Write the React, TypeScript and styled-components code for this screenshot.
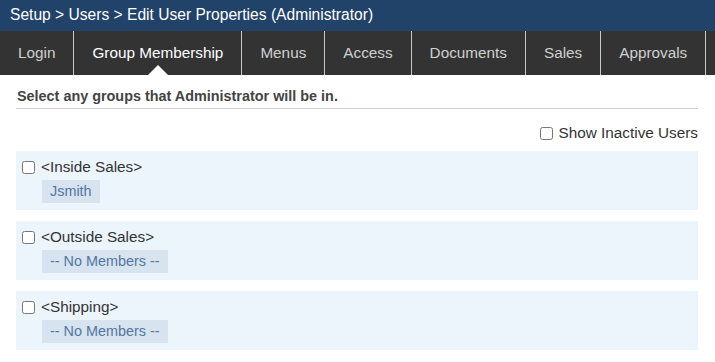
import React, { useState } from 'react';
import styled, { createGlobalStyle } from 'styled-components';

const GlobalStyle = createGlobalStyle`
  body {
    margin: 0;
    background: #fff;
    font-family: "Liberation Sans", Arial, sans-serif;
  }
`;

const TitleBar = styled.div`
  height: 31px;
  background: #214269;
  color: #fff;
  font-size: 15.6px;
  line-height: 29px;
  padding: 0 10px;
`;

const TabBar = styled.div`
  display: flex;
  height: 44px;
  background: #333;
`;

const Tab = styled.div<{ $active?: boolean }>`
  position: relative;
  display: flex;
  align-items: center;
  padding: 0 18px;
  border-right: 1px solid #c8c8c8;
  font-size: 15.3px;
  color: ${(p) => (p.$active ? '#fff' : '#d0d0d0')};
  white-space: nowrap;

  ${(p) =>
    p.$active &&
    `
    &::after {
      content: '';
      position: absolute;
      left: 50%;
      bottom: 0;
      margin-left: -10px;
      border-left: 10px solid transparent;
      border-right: 10px solid transparent;
      border-bottom: 10px solid #fff;
    }
  `}
`;

const Content = styled.div`
  padding: 13px 17px 0 16px;
`;

const Instructions = styled.div`
  font-size: 14.4px;
  line-height: 17px;
  font-weight: bold;
  color: #444;
  padding: 0 0 3px 1px;
  border-bottom: 1px solid #d0d0d0;
`;

const OptionsRow = styled.div`
  display: flex;
  justify-content: flex-end;
  padding: 15px 0 9px;
`;

const CheckLabel = styled.label`
  display: flex;
  align-items: center;
  gap: 6px;
  font-size: 15.3px;
  line-height: 18px;
  color: #333;
`;

const Box = styled.input`
  width: 13px;
  height: 13px;
  margin: 0;
`;

const GroupCard = styled.div`
  background: #ecf4fc;
  padding: 7px 6px 7px 6px;
  margin-bottom: 11px;
`;

const GroupMembers = styled.div`
  display: flex;
  gap: 6px;
  margin: 4px 0 0 20px;
`;

const Chip = styled.span`
  display: inline-block;
  background: #d7e3ef;
  color: #52779f;
  font-size: 14.4px;
  line-height: 23px;
  padding: 0 8px;
`;

const tabs = ['Login', 'Group Membership', 'Menus', 'Access', 'Documents', 'Sales', 'Approvals'];

const groups = [
  { name: '<Inside Sales>', members: ['Jsmith'] },
  { name: '<Outside Sales>', members: [] as string[] },
  { name: '<Shipping>', members: [] as string[] },
];

export default function App(): JSX.Element {
  const [active] = useState('Group Membership');

  return (
    <>
      <GlobalStyle />
      <TitleBar>Setup &gt; Users &gt; Edit User Properties (Administrator)</TitleBar>
      <TabBar>
        {tabs.map((t) => (
          <Tab key={t} $active={t === active}>
            {t}
          </Tab>
        ))}
      </TabBar>
      <Content>
        <Instructions>Select any groups that Administrator will be in.</Instructions>
        <OptionsRow>
          <CheckLabel>
            <Box type='checkbox' />
            Show Inactive Users
          </CheckLabel>
        </OptionsRow>
        {groups.map((g) => (
          <GroupCard key={g.name}>
            <CheckLabel>
              <Box type='checkbox' />
              {g.name}
            </CheckLabel>
            <GroupMembers>
              {g.members.length ? (
                g.members.map((m) => <Chip key={m}>{m}</Chip>)
              ) : (
                <Chip>-- No Members --</Chip>
              )}
            </GroupMembers>
          </GroupCard>
        ))}
      </Content>
    </>
  );
}
